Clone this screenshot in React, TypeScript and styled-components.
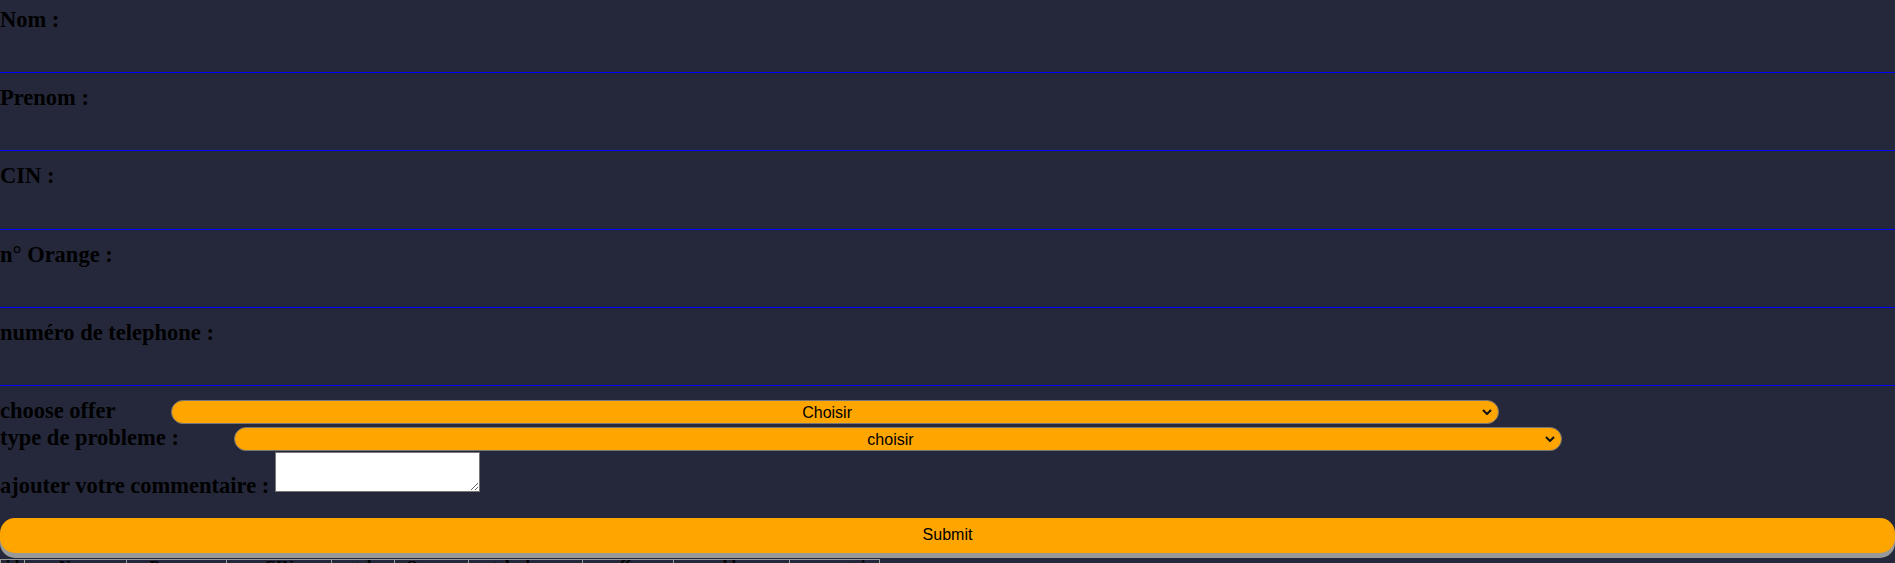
import styled, { createGlobalStyle } from "styled-components";

const GlobalStyle = createGlobalStyle`
    html, body {
        margin: 0;
        padding: 0;
        background: #25283a;
        font-family: "Liberation Serif", "Times New Roman", serif;
    }
`

const Form = styled.form`
    display: block;
`

const Field = styled.div`
    margin-bottom: 5.25px;
`

const FieldLabel = styled.label`
    display: block;
    padding-top: 6.8px;
    font-size: 22.5px;
    font-weight: bold;
    line-height: 25.2px;
    color: #000;
`

const TextInput = styled.input`
    display: block;
    box-sizing: border-box;
    width: 100%;
    height: 41px;
    padding: 0;
    border: none;
    border-bottom: 1px solid #0000ff;
    background: transparent;
    outline: none;
    font-size: 16px;
`

const Choices = styled.div`
    padding-top: 6.6px;
`

const ChoiceRow = styled.div`
    display: flex;
    align-items: baseline;
    height: 27px;
`

const RowLabel = styled.label`
    font-size: 22.5px;
    font-weight: bold;
    line-height: 25px;
    color: #000;
    white-space: nowrap;
`

const SelectWrap = styled.div`
    position: relative;
    display: inline-flex;
    width: 70.08%;
    margin-left: 55.5px;
`

const Select = styled.select`
    box-sizing: border-box;
    width: 100%;
    height: 24px;
    padding: 0 20px 0 4px;
    appearance: none;
    background-color: #ffa500;
    border: 1px solid #767676;
    border-radius: 12px;
    font-family: "Liberation Sans", Arial, sans-serif;
    font-size: 16px;
    text-align: center;
    color: #000;
`

const Chevron = styled.svg`
    position: absolute;
    right: 7px;
    top: 9px;
    pointer-events: none;
`

const CommentRow = styled.div`
    display: flex;
    align-items: flex-end;
    gap: 5.5px;
`

const CommentBox = styled.textarea`
    box-sizing: border-box;
    width: 205px;
    height: 40px;
    margin: 0 0 6px 0;
    background: #fff;
    border: 1px solid #767676;
`

const SubmitButton = styled.button`
    display: block;
    width: 100%;
    height: 35px;
    margin-top: 20px;
    border: none;
    border-radius: 15px;
    background: #ffa500;
    box-shadow: 0 5px #999;
    font-family: "Liberation Sans", Arial, sans-serif;
    font-size: 16px;
    color: #000;
`

const Table = styled.table`
    margin-top: 6px;
    border-collapse: collapse;
`

const HeadCell = styled.th<{ $w: number }>`
    width: ${p => p.$w}px;
    box-sizing: border-box;
    padding: 0;
    border: 1px solid #999;
    font-size: 16px;
    line-height: 14px;
    color: #000;
    white-space: nowrap;
`

const fields = ['Nom :', 'Prenom :', 'CIN :', 'n° Orange :', 'numéro de telephone :']

const columns: [string, number][] = [
    ['id', 24],
    ['Nom', 102],
    ['Prenom', 100],
    ['CIN', 105],
    ['tel', 63],
    ['Orange', 74],
    ['telephone', 114],
    ['offre', 91],
    ['probleme', 116],
    ['commentaire', 88],
]

const Dropdown = ({ placeholder }: { placeholder: string }) => (
    <SelectWrap>
        <Select defaultValue="">
            <option value="">{placeholder}</option>
        </Select>
        <Chevron width="10" height="6" viewBox="0 0 10 6">
            <polyline points="1,1 5,5 9,1" fill="none" stroke="#111" strokeWidth="2" />
        </Chevron>
    </SelectWrap>
)

export default function App() {
    return (
        <>
            <GlobalStyle />
            <Form onSubmit={e => e.preventDefault()}>
                {fields.map((label, idx) => (
                    <Field key={idx}>
                        <FieldLabel>{label}</FieldLabel>
                        <TextInput type="text" />
                    </Field>
                ))}
                <Choices>
                    <ChoiceRow>
                        <RowLabel>choose offer</RowLabel>
                        <Dropdown placeholder="Choisir" />
                    </ChoiceRow>
                    <ChoiceRow>
                        <RowLabel>type de probleme :</RowLabel>
                        <Dropdown placeholder="choisir" />
                    </ChoiceRow>
                    <CommentRow>
                        <RowLabel>ajouter votre commentaire :</RowLabel>
                        <CommentBox />
                    </CommentRow>
                </Choices>
                <SubmitButton type="submit">Submit</SubmitButton>
            </Form>
            <Table>
                <thead>
                    <tr>
                        {columns.map(([name, w]) => (
                            <HeadCell key={name} $w={w}>{name}</HeadCell>
                        ))}
                    </tr>
                </thead>
            </Table>
        </>
    )
}
